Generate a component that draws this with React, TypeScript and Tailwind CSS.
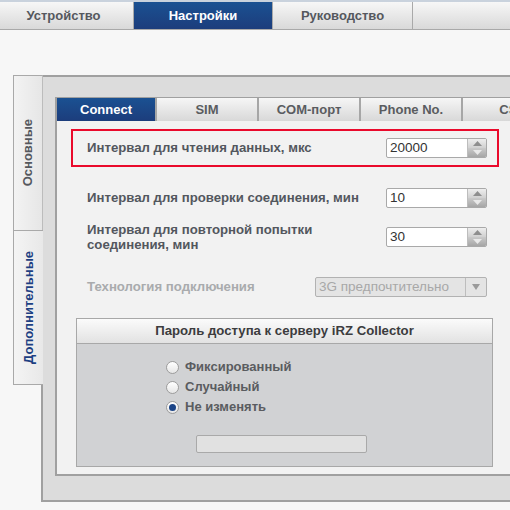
import React from 'react';

const topTabs = [
  { label: 'Устройство', w: 'w-[134px] pr-[6px]', active: false },
  { label: 'Настройки', w: 'w-[139px]', active: true },
  { label: 'Руководство', w: 'w-[140px]', active: false },
];

const innerTabs = ['SIM', 'COM-порт', 'Phone No.', 'CSD'];

function Spinner({ value }: { value: string }) {
  return (
    <div className="flex h-[20px] w-[101px] shrink-0 overflow-hidden rounded-[2px] border border-[#a9a9a9] bg-white">
      <div className="flex-1 pl-[3px] text-[13.5px] leading-[18px] text-[#333]">{value}</div>
      <div className="flex w-[19px] flex-col border-l border-[#bdbdbd]">
        <div className="flex flex-1 items-center justify-center bg-gradient-to-b from-[#eeeeee] to-[#d0d0d0]">
          <svg width="9" height="5" viewBox="0 0 9 5">
            <path d="M0 5 L4.5 0 L9 5 Z" fill="#8e8e8e" />
          </svg>
        </div>
        <div className="flex flex-1 items-center justify-center border-t border-[#c8c8c8] bg-gradient-to-b from-[#c6c6c6] to-[#a6a6a6]">
          <svg width="9" height="5" viewBox="0 0 9 5">
            <path d="M0 0 L9 0 L4.5 5 Z" fill="#e9e9e9" />
          </svg>
        </div>
      </div>
    </div>
  );
}

function Radio({ label, checked }: { label: string; checked?: boolean }) {
  return (
    <div className="flex h-[20px] items-center gap-[6px]">
      <span className="flex h-[13px] w-[13px] items-center justify-center rounded-full border border-[#9c9c9c] bg-gradient-to-b from-white to-[#e6e6e6]">
        {checked && <span className="h-[7px] w-[7px] rounded-full bg-[#1b4487]" />}
      </span>
      <span className="text-[13px] font-bold text-[#5a5c60]">{label}</span>
    </div>
  );
}

export default function App() {
  return (
    <div className="h-[510px] w-[510px] overflow-hidden bg-[#f7f7f7] font-['Liberation_Sans',Arial,sans-serif]">
      {/* top strip + main tabs */}
      <div className="h-[2px] bg-[#c9d2dd]" />
      <div className="flex h-[28px] border-b border-[#a9a9a9] bg-gradient-to-b from-[#f7f7f7] to-[#d9d9d9]">
        {topTabs.map((t) => (
          <div
            key={t.label}
            className={`${t.w} flex shrink-0 items-center justify-center border-r border-[#a9a9a9] text-[13px] font-bold ${
              t.active ? 'bg-gradient-to-b from-[#1a5192] to-[#1c3d7c] text-white' : 'text-[#55585e]'
            }`}
          >
            {t.label}
          </div>
        ))}
        <div className="flex-1" />
      </div>

      <div className="ml-[13px] mt-[45px] flex">
        {/* side tabs */}
        <div className="flex w-[30px] shrink-0 flex-col">
          <div className="flex h-[155px] items-center justify-center border-l border-t border-r border-[#a9a9a9] border-r-[#bcbcbc] bg-gradient-to-r from-[#f3f3f3] to-[#e6e6e6]">
            <span className="rotate-180 text-[13px] font-bold text-[#55585e] [writing-mode:vertical-rl]">Основные</span>
          </div>
          <div className="flex h-[155px] items-center justify-center border-l border-t border-b border-[#a9a9a9] bg-gradient-to-r from-[#f4f4f4] to-[#e8e8e8]">
            <span className="rotate-180 text-[13px] font-bold text-[#1d3f82] [writing-mode:vertical-rl]">Дополнительные</span>
          </div>
          <div className="flex-1 border-r-2 border-[#a0a0a0]" />
        </div>

        {/* main panel */}
        <div className="w-[480px] shrink-0 border-t-2 border-b-2 border-[#a0a0a0] bg-[#dcdcdc] pb-[24px] pl-[12px] pt-[20px]">
          <div className="w-[470px] border-b-2 border-l-2 border-t border-[#a0a0a0] bg-[#f2f2f2] pb-[7px]">
            {/* inner tabs */}
            <div className="flex h-[23px] bg-gradient-to-b from-[#f6f6f6] to-[#d8d8d8]">
              <div className="flex w-[98px] shrink-0 items-center justify-center bg-gradient-to-b from-[#1a5192] to-[#1c3d7c] text-[13px] font-bold text-white">
                Connect
              </div>
              {innerTabs.map((t) => (
                <div
                  key={t}
                  className="flex w-[102px] shrink-0 items-center justify-center border-l-2 border-[#a6a6a6] text-[13px] font-bold text-[#5a5c60]"
                >
                  {t}
                </div>
              ))}
            </div>

            {/* highlighted row */}
            <div className="ml-[14px] mt-[8px] flex h-[38px] w-[428px] items-center border-2 border-[#ea0a2c] pl-[14px] pr-[10px]">
              <span className="flex-1 text-[13.2px] font-bold text-[#53575e]">Интервал для чтения данных, мкс</span>
              <Spinner value="20000" />
            </div>

            <div className="ml-[30px] w-[400px]">
              <div className="mt-[21px] flex h-[20px] items-center">
                <span className="flex-1 text-[13.2px] font-bold text-[#53575e]">Интервал для проверки соединения, мин</span>
                <Spinner value="10" />
              </div>

              <div className="mt-[14px] flex h-[30px] items-center">
                <span className="flex-1 text-[13.2px] font-bold leading-[15px] text-[#53575e]">
                  Интервал для повторной попытки
                  <br />
                  соединения, мин
                </span>
                <Spinner value="30" />
              </div>

              <div className="mt-[25px] flex h-[20px] items-center">
                <span className="flex-1 text-[13.2px] font-bold text-[#a9abad]">Технология подключения</span>
                <div className="flex h-[20px] w-[172px] shrink-0 rounded-[2px] border border-[#b2b2b2] bg-[#e4e4e4]">
                  <span className="flex-1 pl-[3px] text-[13.5px] leading-[18px] text-[#a8a8a8]">3G предпочтительно</span>
                  <span className="flex w-[21px] items-center justify-center border-l border-[#bdbdbd]">
                    <svg width="8" height="6" viewBox="0 0 8 6">
                      <path d="M0 0 L8 0 L4 6 Z" fill="#9a9a9a" />
                    </svg>
                  </span>
                </div>
              </div>
            </div>

            {/* password fieldset */}
            <div className="ml-[19px] mt-[21px] w-[417px] border border-[#a8a8a8] bg-[#d1d2d4]">
              <div className="flex h-[25px] items-center justify-center border-b border-[#a8a8a8] bg-gradient-to-b from-[#fbfbfb] to-[#e2e2e2] text-[13.2px] font-bold text-[#3c3c3e]">
                Пароль доступа к серверу iRZ Collector
              </div>
              <div className="pb-[13px] pl-[89px] pt-[13px]">
                <Radio label="Фиксированный" />
                <Radio label="Случайный" />
                <Radio label="Не изменять" checked />
                <div className="ml-[30px] mt-[18px] h-[18px] w-[171px] rounded-[2px] border border-[#a9a9a9] bg-[#e1e1e1]" />
              </div>
            </div>
          </div>
        </div>
      </div>
    </div>
  );
}
